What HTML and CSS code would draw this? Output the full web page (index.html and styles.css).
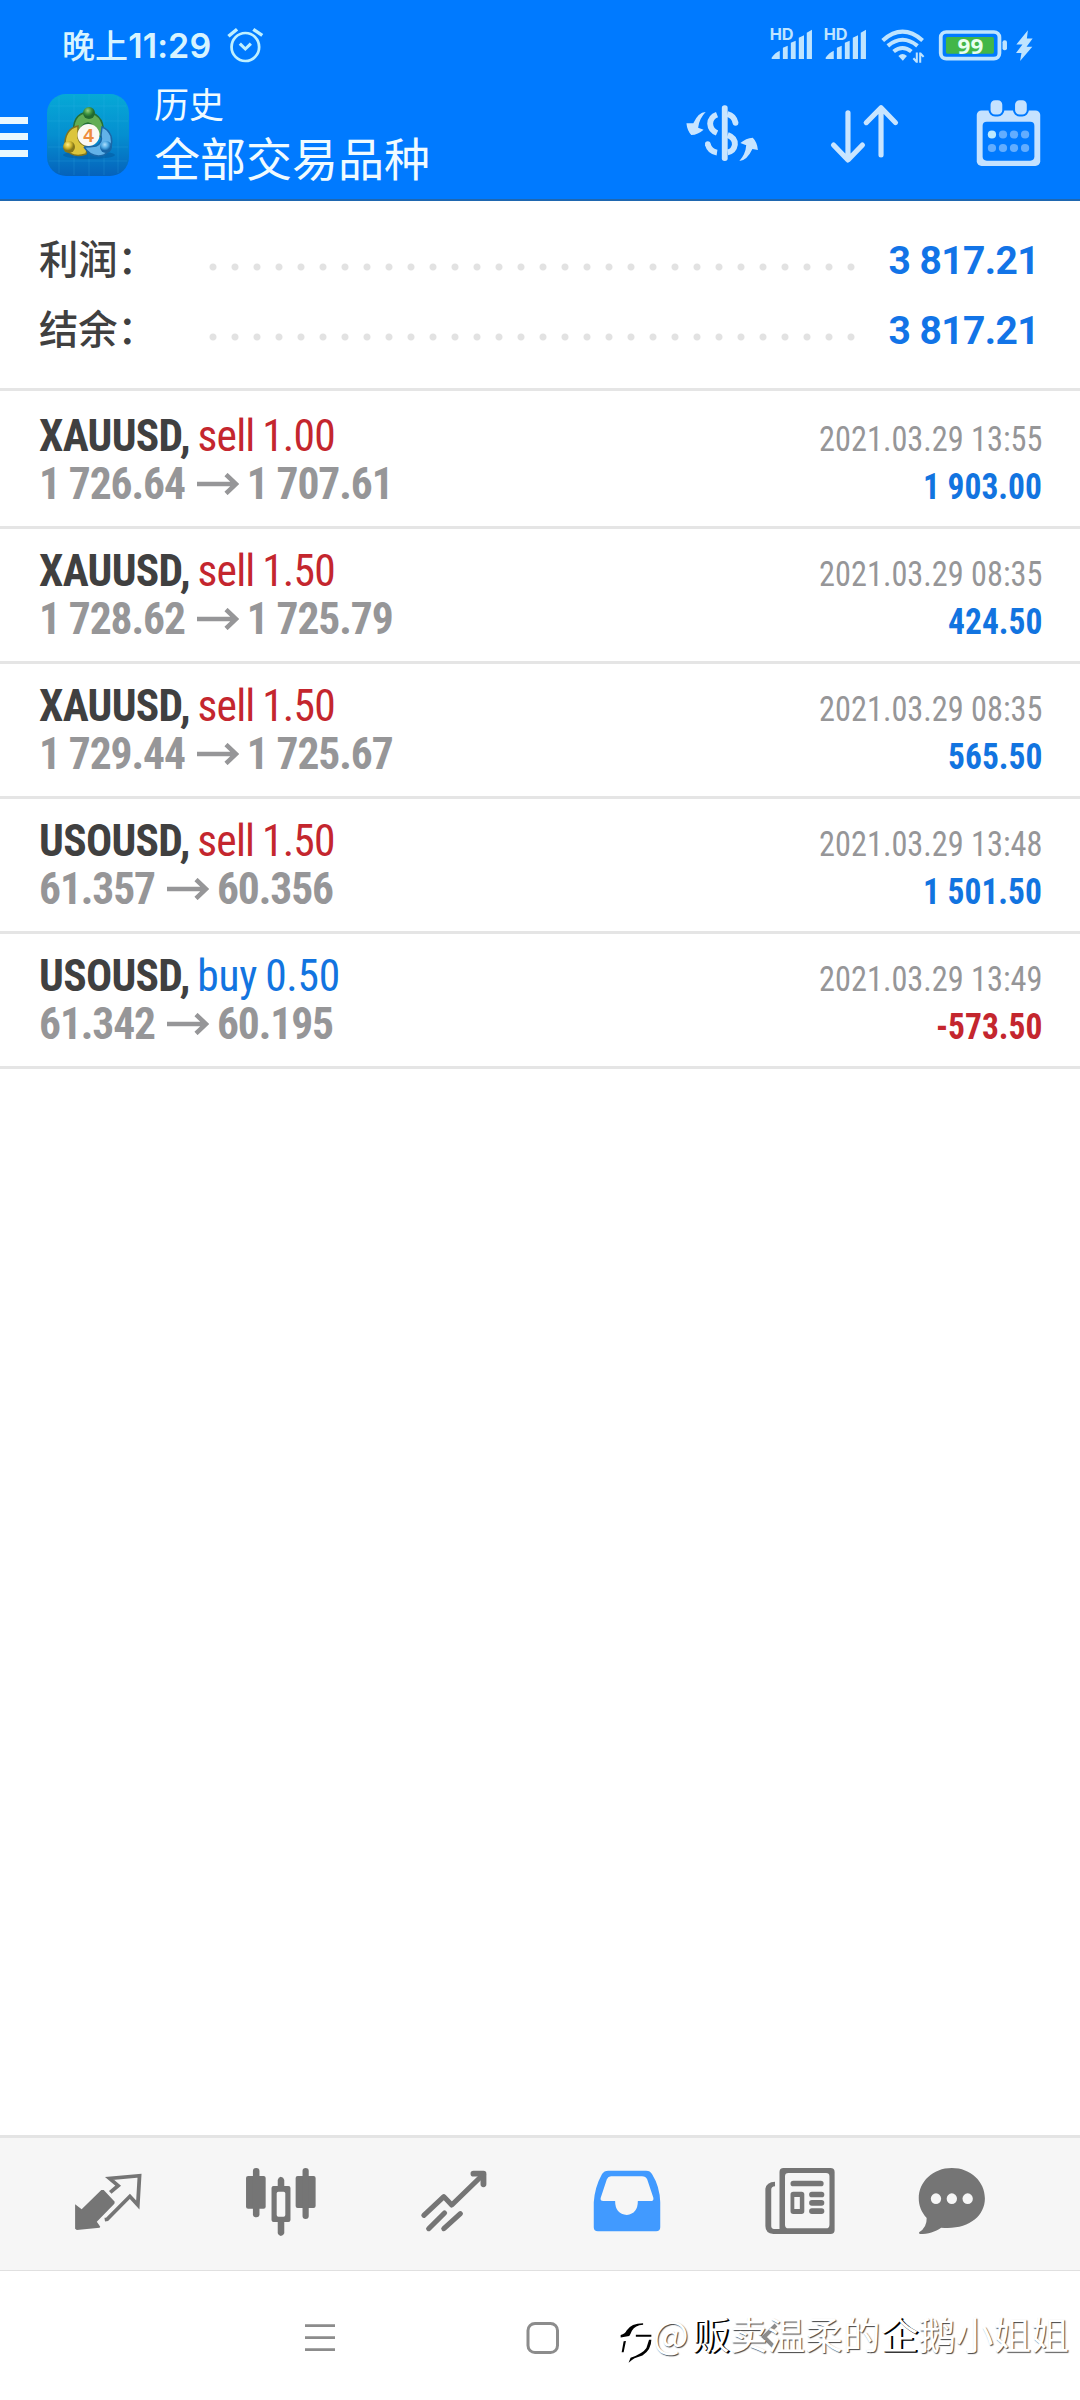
FILE: index.html
```
<!DOCTYPE html>
<html lang="zh-CN">
<head>
<meta charset="utf-8">
<title>历史</title>
<link rel="stylesheet" href="styles.css">
</head>
<body>
<header class="appbar">
  <div class="status">
    <span class="clock"><span class="clock-cjk">晚上</span>11:29</span>
    <svg class="alarm" viewBox="655 78 116 114" preserveAspectRatio="none" fill="none" stroke="#bff0ff" stroke-width="8">
      <ellipse cx="714" cy="141" rx="40" ry="42"/><path d="M698 131l16 16 16-16" stroke-width="9"/><path d="M665 109l25-21M763 106l-26-18" stroke-width="10"/>
    </svg>
    <div class="status-right">
      <svg class="signal" viewBox="660 78 130 108" preserveAspectRatio="none" fill="#bfe4ff"><text class="hd" x="665" y="120" textLength="69" lengthAdjust="spacingAndGlyphs">HD</text><path d="M670 174q10-16 24-22v25h-21q-3 0-3-3M703 143l14-6v40h-14zM726 128l14-6v55h-14zM749 113l15-7v71h-15zM772 98l15-9v88h-15z"/></svg>
      <svg class="signal" viewBox="660 78 130 108" preserveAspectRatio="none" fill="#bfe4ff"><text class="hd" x="665" y="120" textLength="69" lengthAdjust="spacingAndGlyphs">HD</text><path d="M670 174q10-16 24-22v25h-21q-3 0-3-3M703 143l14-6v40h-14zM726 128l14-6v55h-14zM749 113l15-7v71h-15zM772 98l15-9v88h-15z"/></svg>
      <svg class="wifi" viewBox="985 82 135 110" preserveAspectRatio="none" fill="none" stroke="#bfe4ff" stroke-width="12">
        <path d="M993 122Q1051 70 1110 122M1008 138Q1051 102 1095 138M1025 155Q1051 134 1077 155"/><path d="M1039 168q12-11 25 0l-12 14z" fill="#bfe4ff" stroke="none"/><path d="M1093 158v30M1103 158v30M1083 175l10 11M1113 171l-10-11" stroke-width="6"/>
      </svg>
      <svg class="battery" viewBox="1155 86 204 96" preserveAspectRatio="none">
        <rect x="1163" y="95" width="171" height="80" rx="16" fill="none" stroke="#bfe4ff" stroke-width="11"/><rect x="1178" y="110" width="140" height="50" rx="5" fill="#42b648"/><rect x="1343" y="120" width="13" height="30" rx="6" fill="#bfe4ff"/><text class="pct" x="1212" y="160" textLength="75" lengthAdjust="spacingAndGlyphs">99</text>
      </svg>
      <svg class="bolt" viewBox="1378 86 56 98" preserveAspectRatio="none" fill="#bfe4ff"><path d="M1416 90l-34 42h18l-19 25h16l-4 24 36-42h-17l18-25h-17z"/></svg>
    </div>
  </div>
  <div class="toolbar">
    <svg class="menu" viewBox="0 0 28 40" fill="#e9f8ff"><path d="M0 0h28v7H0zM0 16h28v7H0zM0 33h28v7H0z"/></svg>
    <svg class="logo" viewBox="0 0 82 82">
      <defs>
        <linearGradient id="sky" x1="0" y1="0" x2="0" y2="1"><stop offset="0" stop-color="#06a9d6"/><stop offset=".5" stop-color="#058fd0"/><stop offset="1" stop-color="#0562bb"/></linearGradient>
        <radialGradient id="green" cx=".4" cy=".3"><stop offset="0" stop-color="#9bd080"/><stop offset=".6" stop-color="#3f9440"/><stop offset="1" stop-color="#226a30"/></radialGradient>
        <radialGradient id="gold" cx=".4" cy=".3"><stop offset="0" stop-color="#fff08a"/><stop offset=".6" stop-color="#cfb52c"/><stop offset="1" stop-color="#83761c"/></radialGradient>
        <radialGradient id="blue" cx=".4" cy=".3"><stop offset="0" stop-color="#aee0ff"/><stop offset=".6" stop-color="#4aa5e0"/><stop offset="1" stop-color="#1666a8"/></radialGradient>
      </defs>
      <rect width="82" height="82" rx="19" fill="url(#sky)"/>
      <path d="M12 3v76M27 1v80M42 0v82M57 1v80M71 3v76M3 12h76M1 27h80M1 53h80M2 67h78" stroke="#3cb9e8" stroke-opacity=".2"/>
      <ellipse cx="42" cy="61" rx="26" ry="4" fill="#024f90" opacity=".4"/>
      <path d="M27 42q-3-22 14-24 18 3 15 26l-7-4q-1-10-8-11-7 1-8 9z" fill="#62ad55" stroke="#276f35" stroke-width="1.500"/>
      <path d="M31 32q-14 3-13 21 6 12 21 7l2-7q-8-2-10-9z" fill="#dcc53c" stroke="#7f7420" stroke-width="1.500"/>
      <path d="M37 53q8 12 20 8 10-7 7-19-3-7-9-9l-1 8q2 8-5 11-6 1-12 1" fill="#62b2e8" stroke="#1b68a8" stroke-width="1.500"/>
      <circle cx="42" cy="19" r="6" fill="url(#green)"/><circle cx="22" cy="53" r="6" fill="url(#gold)"/><circle cx="59" cy="53" r="6" fill="url(#blue)"/>
      <circle cx="41.500" cy="41" r="11" fill="#fbf8f2"/><text class="four" x="41.500" y="48" text-anchor="middle">4</text>
    </svg>
    <div class="titles"><div class="sub">历史</div><h1>全部交易品种</h1></div>
    <svg class="tool dollar" viewBox="415 303 227 192" preserveAspectRatio="none" fill="#c9e5ff">
      <path d="M481 336q-22 1-36 34l-20 0q2 22 14 35q20-1 36-16l-16-6q3-27 22-47M579 483q22-1 38-36l16 3q-2-24-15-37q-20 1-36 16l17 7q-2 27-20 47"/>
      <path d="M514 344q-19 7-20 27 1 20 20 28M487 433q6 22 27 25M544 342q20 5 24 27M545 405q22 8 21 29-3 20-21 23" fill="none" stroke="#c9e5ff" stroke-width="17"/><circle cx="568" cy="369" r="8"/><circle cx="487" cy="432" r="8"/><rect x="528" y="316" width="17" height="167" rx="8"/>
    </svg>
    <svg class="tool sort" viewBox="838 308 212 192" preserveAspectRatio="none" fill="none" stroke="#c9e5ff" stroke-width="15" stroke-linecap="round" stroke-linejoin="round"><path d="M896 340v141M854 437l42 45 42-45M992 467V330M949 370l43-45 42 45"/></svg>
    <svg class="tool calendar" viewBox="1260 298 200 206" preserveAspectRatio="none">
      <rect x="1268" y="332" width="184" height="166" rx="14" fill="#c5e2ff"/><rect x="1285" y="366" width="150" height="116" rx="12" fill="#007aff"/>
      <g fill="#c5e2ff" stroke="#007aff" stroke-width="6"><rect x="1305" y="299" width="40" height="48" rx="16"/><rect x="1376" y="299" width="40" height="48" rx="16"/></g>
      <circle cx="1312" cy="404" r="12" fill="#bdeaff"/><g fill="#62adff"><circle cx="1344" cy="404" r="12"/><circle cx="1376" cy="404" r="12"/><circle cx="1408" cy="404" r="12"/><circle cx="1312" cy="444" r="12"/><circle cx="1344" cy="444" r="12"/><circle cx="1376" cy="444" r="12"/><circle cx="1408" cy="444" r="12"/></g>
    </svg>
  </div>
</header>
<main class="content">
  <section class="summary">
    <div class="sum-row"><span class="label">利润：</span><span class="dots"></span><span class="total">3 817.21</span></div>
    <div class="sum-row"><span class="label">结余：</span><span class="dots"></span><span class="total">3 817.21</span></div>
  </section>
  <section class="trade first">
    <div class="line"><span class="deal"><b>XAUUSD,</b> <span class="sell">sell 1.00</span></span><time>2021.03.29 13:55</time></div>
    <div class="line"><span class="prices">1 726.64<svg class="arrow" viewBox="0 0 42 22"><path d="M0 11h39M29 1.500l10 9.500-10 9.500"/></svg>1 707.61</span><span class="profit up">1 903.00</span></div>
  </section>
  <section class="trade">
    <div class="line"><span class="deal"><b>XAUUSD,</b> <span class="sell">sell 1.50</span></span><time>2021.03.29 08:35</time></div>
    <div class="line"><span class="prices">1 728.62<svg class="arrow" viewBox="0 0 42 22"><path d="M0 11h39M29 1.500l10 9.500-10 9.500"/></svg>1 725.79</span><span class="profit up">424.50</span></div>
  </section>
  <section class="trade">
    <div class="line"><span class="deal"><b>XAUUSD,</b> <span class="sell">sell 1.50</span></span><time>2021.03.29 08:35</time></div>
    <div class="line"><span class="prices">1 729.44<svg class="arrow" viewBox="0 0 42 22"><path d="M0 11h39M29 1.500l10 9.500-10 9.500"/></svg>1 725.67</span><span class="profit up">565.50</span></div>
  </section>
  <section class="trade">
    <div class="line"><span class="deal"><b>USOUSD,</b> <span class="sell">sell 1.50</span></span><time>2021.03.29 13:48</time></div>
    <div class="line"><span class="prices">61.357<svg class="arrow" viewBox="0 0 42 22"><path d="M0 11h39M29 1.500l10 9.500-10 9.500"/></svg>60.356</span><span class="profit up">1 501.50</span></div>
  </section>
  <section class="trade">
    <div class="line"><span class="deal"><b>USOUSD,</b> <span class="buy">buy 0.50</span></span><time>2021.03.29 13:49</time></div>
    <div class="line"><span class="prices">61.342<svg class="arrow" viewBox="0 0 42 22"><path d="M0 11h39M29 1.500l10 9.500-10 9.500"/></svg>60.195</span><span class="profit down">-573.50</span></div>
  </section>
</main>
<nav class="tabs">
  <span class="tab"><svg viewBox="210 132 209 216" preserveAspectRatio="none"><path d="M219 253l19 15 57-58 7 0 32 35-1 6-51 54 10 15-2 3-66 7-5-4z" fill="#757575"/><path d="M321 217l23-20-25-22 87-8-5 88-23-26-66 69-7 1" fill="none" stroke="#757575" stroke-width="11"/></svg></span>
  <span class="tab"><svg viewBox="712 132 209 216" preserveAspectRatio="none" fill="#757575"><rect x="715" y="168" width="57" height="98" rx="6"/><rect x="735" y="144" width="19" height="148" rx="9"/><rect x="859" y="168" width="58" height="96" rx="6"/><rect x="879" y="144" width="18" height="153" rx="9"/><path d="M807 198v-18q2-9 9-10 8 1 10 10v18h12q6 0 6 6v96q0 6-6 6h-12v34q-2 7-10 8-7-1-9-8v-34h-12q-6 0-6-6v-96q0-6 6-6zM809 215q-5 0-5 5v65q0 5 5 5h15q5 0 5-5v-65q0-5-5-5z" fill-rule="evenodd"/></svg></span>
  <span class="tab"><svg viewBox="1214 132 209 216" preserveAspectRatio="none" fill="none" stroke="#757575" stroke-width="15" stroke-linecap="round" stroke-linejoin="round"><path d="M1231 286l58-56 23 25 92-92M1245 326l46-47M1289 326l48-45"/><path d="M1375 161h29v32" stroke-width="17"/></svg></span>
  <span class="tab"><svg viewBox="150 132 209 216" preserveAspectRatio="none"><path d="M200 152h110q12 0 17 10 23 38 24 85v75q0 12-12 12H170q-12 0-12-12v-75q3-46 24-85 6-10 18-10" fill="#419aff"/><path d="M208 169h90q11 0 15 9l18 55q2 10-8 10h-37q0 38-32 42-34-3-34-42h-34q-10 0-8-9l18-56q4-9 12-9" fill="#f6f6f6"/></svg></span>
  <span class="tab"><svg viewBox="653 132 209 216" preserveAspectRatio="none" fill="#757575"><path d="M710 144h136q12 0 12 12v174q0 12-12 12H680q-23-2-23-24V206q3-20 28-21v14q-11 1-11 10v109q0 8 8 9h16V156q0-12 12-12M724 159q-10 0-10 10v145q0 11 10 11h109q10 0 10-11V169q0-10-10-10z" fill-rule="evenodd"/><rect x="730" y="182" width="96" height="17" rx="8"/><path d="M738 215h24q8 0 8 8v51q0 8-8 8h-24q-8 0-8-8v-51q0-8 8-8m3 16v36h16v-36z" fill-rule="evenodd"/><rect x="784" y="215" width="44" height="17" rx="8"/><rect x="784" y="240" width="44" height="17" rx="8"/><rect x="784" y="265" width="44" height="17" rx="8"/></svg></span>
  <span class="tab last"><svg viewBox="1095 132 209 216" preserveAspectRatio="none"><path d="M1199 144c55 0 96 41 96 91 0 56-51 96-127 88-17 12-38 19-62 19q-3-1-2-5 23-15 22-43c-16-18-23-37-23-59 0-50 41-91 96-91" fill="#757575"/><g fill="#f6f6f6"><ellipse cx="1153" cy="236" rx="15" ry="16"/><ellipse cx="1199" cy="236" rx="15" ry="16"/><ellipse cx="1245" cy="236" rx="15" ry="16"/></g></svg></span>
</nav>
<footer class="sysnav">
  <svg class="sys" viewBox="0 0 34 36" stroke="#8c8c8c" stroke-width="2.700"><path d="M2 5.700h30M2 17.700h30M2 29.700h30"/></svg>
  <svg class="sys" viewBox="0 0 34 36" fill="none" stroke="#8c8c8c" stroke-width="3"><rect x="2" y="3.500" width="29.500" height="29" rx="7"/></svg>
  <svg class="sys" viewBox="0 0 34 36" fill="none" stroke="#8c8c8c" stroke-width="4"><path d="M27 5L15 17l11 11"/></svg>
  <div class="mark"><svg viewBox="30 60 100 135"><path d="M32 105q14-4 18-14 14-22 50-22v5q-24 2-34 18-4 10-8 16l-26 4zM78 104h47v6H78zM41 124l7-1-7 34h-6zM118 119h7q0 30-27 48-10 4-24 8-10 6-18 14l6-15q38-14 48-30z"/></svg><span><i>@</i><b>贩</b>卖温柔的<b>企</b>鹅小姐姐</span></div>
</footer>
</body>
</html>
```
FILE: styles.css
```
* { box-sizing: border-box; }
body {
  margin: 0;
  width: 1080px;
  height: 2400px;
  display: flex;
  flex-direction: column;
  background: #fff;
  color: #404040;
  font-family: Roboto, "Noto Sans CJK SC", sans-serif;
  overflow: hidden;
}
svg { display: block; flex: none; }
.appbar { height: 201px; background: #007aff; border-bottom: 2px solid #1f67b0; color: #f0fbff; }
.status { display: flex; height: 84px; padding: 26px 46px 0 62px; }
.clock { display: flex; align-items: center; height: 40px; width: 163px; font: 600 34px/40px Inter, sans-serif; letter-spacing: .1px; color: #d8f4ff; }
.clock-cjk { font: 500 33px/40px "Noto Sans CJK SC", sans-serif; height: 44px; }
.alarm { width: 40px; height: 38px; }
.status-right { display: flex; margin-left: auto; }
.signal { width: 45px; height: 36px; margin-right: 9px; }
.hd { font: 700 46px Inter, sans-serif; }
.wifi { width: 46px; height: 37px; margin: 1px 12px 0 4px; }
.battery { width: 70px; height: 32px; margin-top: 3px; }
.pct { font: 700 66px "Noto Sans", sans-serif; fill: #e8fff0; }
.bolt { width: 19px; height: 33px; margin: 3px 0 0 7px; }
.toolbar { display: flex; height: 115px; }
.menu { width: 28px; height: 40px; margin-top: 33px; }
.logo { width: 82px; height: 82px; margin: 10px 0 0 19px; }
.four { font: 700 19px "Liberation Sans", sans-serif; fill: #ee8c3c; }
.titles { width: 529px; padding-left: 25px; font-family: "Noto Sans CJK SC", sans-serif; white-space: nowrap; }
.sub { font-size: 35px; line-height: 37px; }
.titles h1 { margin: 7px 0 0; font-size: 46px; font-weight: 400; line-height: 56px; }
.tool { height: 64px; margin-top: 17px; }
.dollar { width: 78px; margin-left: 25px; }
.sort { width: 73px; margin-left: 67px; margin-right: 1px; margin-top: 18px; }
.calendar { width: 69px; height: 69px; margin: 15px 0 0 72px; }
.content { flex: 1; }
.summary { height: 190px; padding-top: 24px; border-bottom: 3px solid #e5e5e5; }
.sum-row { display: flex; height: 70px; padding: 0 41px 0 39px; line-height: 70px; }
.label { width: 163px; font: 500 39.300px/64px "Noto Sans CJK SC", sans-serif; white-space: nowrap; }
.dots { width: 660px; height: 22px; margin: 31px auto 0 0; background: radial-gradient(circle, #e2e2e2 0 3px, transparent 4px) 0 0 / 22px 22px; }
.total { font-size: 39px; font-weight: 700; letter-spacing: -.6px; line-height: 72px; color: #1274e7; }
.trade { height: 135px; padding: 19px 38px 0 39px; border-bottom: 3px solid #e5e5e5; font-family: "Roboto Condensed", Roboto, sans-serif; font-stretch: 75%; }
.trade.first { height: 138px; padding-top: 22px; }
.line { display: flex; justify-content: space-between; align-items: baseline; height: 48px; line-height: 48px; white-space: nowrap; }
.deal, .prices { font-size: 43.500px; }
.deal { letter-spacing: -.8px; word-spacing: -1.500px; }
.deal b { letter-spacing: -.7px; }
.sell { color: #c4262e; }
.buy { color: #1274e0; letter-spacing: -.3px; }
.line time { font-size: 35.500px; color: #969698; transform: scaleX(.91); transform-origin: right; }
.prices { display: flex; align-items: center; color: #969698; font-weight: 700; letter-spacing: -1.100px; }
.arrow { width: 42px; height: 22px; margin: 0 8px 0 12px; fill: none; stroke: #969698; stroke-width: 4.500px; transform: translateY(-1px); }
.profit { font-size: 36px; font-weight: 700; transform: scaleX(.93); transform-origin: right; }
.up { color: #1274e0; }
.down { color: #c4262e; }
.tabs { display: flex; height: 136px; padding: 26px 0 0 22px; background: #f6f6f6; border-top: 3px solid #e4e4e4; border-bottom: 1px solid #e0e0e0; }
.tab { display: flex; justify-content: center; width: 172.800px; }
.tab.last { width: 133px; }
.tab svg { width: 72px; height: 72px; }
.sysnav { display: flex; position: relative; height: 129px; padding: 49px 0 0 303px; gap: 189px; }
.sys { width: 34px; height: 36px; }
.mark { position: absolute; left: 620px; top: 35px; display: flex; color: #fff; font: 400 37.700px/54px "Noto Sans CJK SC", sans-serif; white-space: nowrap; text-shadow: 1px 1px 1px #444; }
.mark svg { width: 33px; height: 45px; margin-top: 14px; }
.mark span { display: flex; }
.mark i { width: 39px; font-style: normal; }
.mark b { font-weight: 400; text-shadow: 1px 1px 0 #000, 2px 1px 0 #000; }
```
